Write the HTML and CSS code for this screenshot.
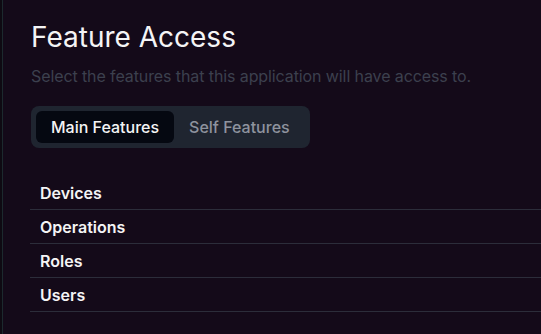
FILE: index.html
```html
<!DOCTYPE html>
<html lang="en">
<head>
    <meta charset="UTF-8">
    <meta name="viewport" content="width=device-width, initial-scale=1.0">
    <title>Feature Access</title>
    <link rel="stylesheet" href="styles.css">
</head>
<body>
    <div class="panel">
        <h1>Feature Access</h1>
        <p class="subtitle">Select the features that this application will have access to.</p>

        <div class="tabs">
            <button class="tab active">Main Features</button>
            <button class="tab">Self Features</button>
        </div>

        <ul class="feature-list">
            <li>Devices</li>
            <li>Operations</li>
            <li>Roles</li>
            <li>Users</li>
        </ul>
    </div>
</body>
</html>
```

FILE: styles.css
```css
html, body {
    margin: 0;
    height: 100%;
}

body {
    background: #0e0a12;
    font-family: Inter, "Noto Sans", sans-serif;
    padding-left: 2px;
    overflow: hidden;
}

.panel {
    background: #140a19;
    border-left: 1px solid #1c2a2e;
    min-height: 100%;
    padding: 20px 0 0 27px;
    box-sizing: border-box;
}

h1 {
    margin: 0;
    font-size: 28px;
    font-weight: 400;
    line-height: 34px;
    color: #f4f4f5;
    padding-left: 1px;
}

.subtitle {
    margin: 12px 0 0;
    font-size: 16px;
    line-height: 20px;
    letter-spacing: -0.1px;
    color: #3c404e;
    padding-left: 1px;
}

.tabs {
    display: inline-flex;
    margin-top: 20px;
    margin-left: 1px;
    padding: 5px;
    background: #1f2530;
    border-radius: 8px;
}

.tab {
    font-family: inherit;
    font-size: 16px;
    font-weight: 500;
    line-height: 20px;
    padding: 6px 15px;
    border: none;
    border-radius: 6px;
    background: transparent;
    color: #8e939e;
    cursor: pointer;
}

.tab.active {
    background: #050811;
    color: #f4f4f5;
}

.feature-list {
    list-style: none;
    margin: 28px 0 0;
    padding: 0;
}

.feature-list li {
    padding: 7px 10px 6px;
    font-size: 16px;
    font-weight: 600;
    line-height: 20px;
    color: #f4f4f5;
    border-bottom: 1px solid #2c2d3a;
}
```
